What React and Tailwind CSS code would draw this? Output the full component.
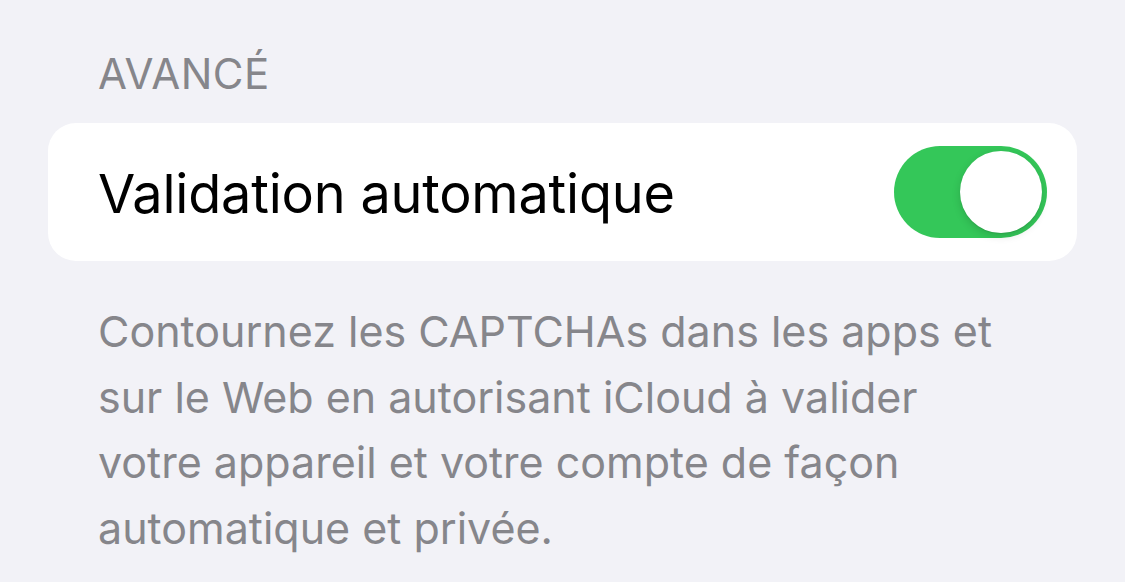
export default function App() {
  return (
    <div
      className="w-[1125px] h-[582px] overflow-hidden bg-[#f2f2f7] pt-[48px]"
      style={{ fontFamily: "Inter, 'Noto Sans', sans-serif" }}
    >
      <div className="pl-[98px] text-[42px] leading-[52px] text-[#86868b] tracking-[0.5px]">
        AVANCÉ
      </div>
      <div className="mx-[48px] mt-[23px] h-[138px] rounded-[28px] bg-white flex items-center justify-between pl-[50px] pr-[30px]">
        <span className="text-[54px] leading-none text-black tracking-[-0.2px] translate-y-[2px]">
          Validation automatique
        </span>
        <div className="relative w-[153px] h-[92px] rounded-full bg-[#34c759]">
          <div className="absolute right-[5px] top-[5px] w-[82px] h-[82px] rounded-full bg-white shadow-[0_3px_8px_rgba(0,0,0,0.15),0_1px_1px_rgba(0,0,0,0.08)]" />
        </div>
      </div>
      <p className="pl-[98px] pr-[40px] mt-[38px] text-[43px] leading-[65.5px] text-[#86868b]">
        Contournez les CAPTCHAs dans les apps et
        <br />
        sur le Web en autorisant iCloud à valider
        <br />
        votre appareil et votre compte de façon
        <br />
        automatique et privée.
      </p>
    </div>
  );
}
